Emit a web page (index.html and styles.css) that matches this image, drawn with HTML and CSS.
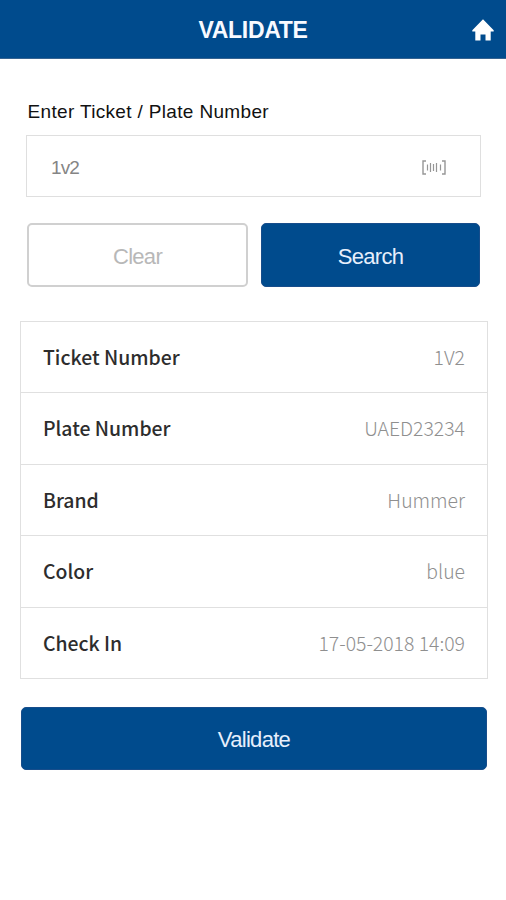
FILE: index.html
```html
<!DOCTYPE html>
<html lang="en">
<head>
<meta charset="utf-8">
<title>Validate</title>
<link rel="stylesheet" href="styles.css">
</head>
<body>
<header class="bar">
  <h1 class="title">VALIDATE</h1>
  <a class="home" aria-label="Home"><svg width="22" height="22" viewBox="0 0 22 22"><path d="M11 0.300 0.300 11.300V12.500H3.300V21.500H8.500V15.500H13.500V21.500H18.700V12.500H21.700V11.300Z"/></svg></a>
</header>
<main class="content">
  <form class="lookup">
    <label class="label">Enter Ticket / Plate Number</label>
    <div class="field">
      <span class="value">1v2</span>
      <svg class="scan" width="24" height="15" viewBox="0 0 24 15"><path d="M4 1H1v13h3M20 1h3v13h-3" stroke-width="1.400"/><path d="M5.500 4.500v6M8.500 3v9M11.500 4v7M14.500 3v9M18.500 4.500v6" stroke-width="1.200"/></svg>
    </div>
    <div class="actions">
      <button type="button" class="btn clear">Clear</button>
      <button type="button" class="btn search">Search</button>
    </div>
  </form>
  <dl class="details">
    <div class="row"><dt>Ticket Number</dt><dd>1V2</dd></div>
    <div class="row"><dt>Plate Number</dt><dd>UAED23234</dd></div>
    <div class="row"><dt>Brand</dt><dd>Hummer</dd></div>
    <div class="row"><dt>Color</dt><dd>blue</dd></div>
    <div class="row"><dt>Check In</dt><dd>17-05-2018 14:09</dd></div>
  </dl>
  <button type="button" class="btn validate">Validate</button>
</main>
</body>
</html>
```
FILE: styles.css
```css
* { box-sizing: border-box; }
body { margin: 0; background: #fff; font-family: "Liberation Sans", Arial, sans-serif; }
.bar { display: grid; grid-template-columns: 44px 1fr 44px; align-items: center; height: 59px; padding-top: 1px; background: #004b8d; border-bottom: 1px solid #356391; }
.title { grid-column: 2; margin: 0; text-align: center; color: #f8faff; font-size: 23px; line-height: 28px; letter-spacing: -.3px; }
.home { display: flex; padding-left: 10px; }
.home svg { fill: #fff; }
.content { padding: 40px 18px 0 20px; }
.lookup { padding: 0 7px 0 6px; }
.label { display: block; height: 36px; padding-left: 1.500px; font-size: 19px; line-height: 26px; letter-spacing: .34px; color: #111; }
.field { display: flex; align-items: center; justify-content: space-between; height: 62px; padding: 3px 34px 0 24px; border: 1px solid #dfdfdf; }
.value { font-size: 19px; letter-spacing: -.9px; color: #858585; }
.scan { fill: none; stroke: #969696; }
.actions { display: flex; gap: 13px; margin-top: 26px; padding: 0 1px; }
.btn { display: block; height: 64px; padding: 3px 0 0; border: 0; border-radius: 5px; font: 22px "Liberation Sans", Arial, sans-serif; letter-spacing: -.7px; }
.clear { width: 221px; border: 2px solid #d0d0d0; background: #fff; color: #b8b8b8; }
.search, .validate { background: #004b8d; color: #e7effc; border: 1px solid #174d8b; }
.search { flex: 1; }
.details { margin: 34px 0 28px; border: 1px solid #e0e0e0; }
.row { display: flex; align-items: center; justify-content: space-between; height: 71.500px; border-bottom: 1px solid #e0e0e0; padding: 0 22px; font-family: "Noto Sans CJK SC", sans-serif; font-size: 19.400px; line-height: 28px; }
.row:first-child { height: 71px; }
.row:last-child { border-bottom: 0; height: 70.500px; }
dt { font-weight: 500; color: #2d2d2d; }
dd { margin: 0; font-weight: 300; color: #8f8f8f; }
.validate { width: 466px; height: 63px; margin-left: 1px; }
```
